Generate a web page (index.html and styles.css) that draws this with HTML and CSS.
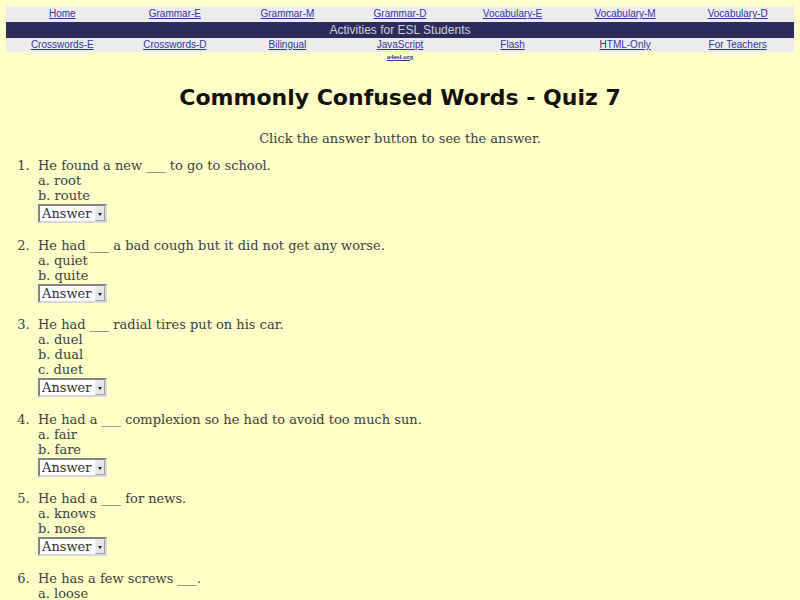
FILE: index.html
```html
<!DOCTYPE html>
<html lang="en">
<head>
  <meta charset="UTF-8" />
  <title>Commonly Confused Words - Quiz 7</title>
  <link rel="stylesheet" href="styles.css">
</head>
<body>
  <div class="topnav">
    <div class="nav-row">
      <a href="#">Home</a>
      <a href="#">Grammar-E</a>
      <a href="#">Grammar-M</a>
      <a href="#">Grammar-D</a>
      <a href="#">Vocabulary-E</a>
      <a href="#">Vocabulary-M</a>
      <a href="#">Vocabulary-D</a>
    </div>
    <div class="nav-banner">Activities for ESL Students</div>
    <div class="nav-row short">
      <a href="#">Crosswords-E</a>
      <a href="#">Crosswords-D</a>
      <a href="#">Bilingual</a>
      <a href="#">JavaScript</a>
      <a href="#">Flash</a>
      <a href="#">HTML-Only</a>
      <a href="#">For Teachers</a>
    </div>
    <div class="nav-sub">
      <a href="#" class="site-link">a4esl.org</a>
    </div>
  </div>

  <h1 class="title">Commonly Confused Words - Quiz 7</h1>
  <p class="hint">Click the answer button to see the answer.</p>

  <ol class="quiz">
    <li>
      He found a new ___ to go to school.<br>
      a. root<br>
      b. route
      <span class="answer"><select><option>Answer</option><option>route</option></select></span>
    </li>
    <li>
      He had ___ a bad cough but it did not get any worse.<br>
      a. quiet<br>
      b. quite
      <span class="answer"><select><option>Answer</option><option>quite</option></select></span>
    </li>
    <li>
      He had ___ radial tires put on his car.<br>
      a. duel<br>
      b. dual<br>
      c. duet
      <span class="answer"><select><option>Answer</option><option>dual</option></select></span>
    </li>
    <li>
      He had a ___ complexion so he had to avoid too much sun.<br>
      a. fair<br>
      b. fare
      <span class="answer"><select><option>Answer</option><option>fair</option></select></span>
    </li>
    <li>
      He had a ___ for news.<br>
      a. knows<br>
      b. nose
      <span class="answer"><select><option>Answer</option><option>nose</option></select></span>
    </li>
    <li>
      He has a few screws ___.<br>
      a. loose<br>
      b. lose
      <span class="answer"><select><option>Answer</option><option>loose</option></select></span>
    </li>
  </ol>
</body>
</html>
```

FILE: styles.css
```css
body {
  margin: 0;
  padding: 6px;
  background: #ffffc8;
  color: #404040;
  font-family: 'DejaVu Serif', serif;
  font-size: 13px;
}
.topnav {
  font-family: 'Liberation Sans', Arial, sans-serif;
}
.nav-row {
  display: grid;
  grid-template-columns: repeat(7, 1fr);
  background: #ececec;
  height: 16px;
  line-height: 16px;
  text-align: center;
  font-size: 10px;
}
.nav-row.short {
  height: 14px;
  line-height: 14px;
}
.nav-row a, .nav-sub a {
  color: #333399;
}
.nav-banner {
  background: #2b2b5c;
  color: #cfcfdf;
  text-align: center;
  font-size: 12px;
  height: 16px;
  line-height: 16px;
}
.nav-sub {
  display: grid;
  grid-template-columns: repeat(7, 1fr);
  text-align: center;
  height: 10px;
  line-height: 10px;
}
.nav-sub .site-link {
  grid-column: 4;
  font-family: 'Liberation Serif', serif;
  font-size: 7px;
  font-weight: bold;
}
.title {
  font-family: 'Comic Sans MS', 'DejaVu Sans', sans-serif;
  font-size: 22px;
  font-weight: bold;
  color: #111;
  text-align: center;
  margin: 23px 0 0;
}
.hint {
  text-align: center;
  margin: 21px 0 0;
}
.quiz {
  margin: 12px 0 0;
  padding-left: 32px;
  line-height: 15px;
}
.quiz li {
  margin-bottom: 14.5px;
}
.quiz li::marker {
  content: counter(list-item) ".  ";
}
/* drop-down that reveals the answer */
.answer {
  display: block;
  position: relative;
  box-sizing: border-box;
  width: 69px;
  height: 20px;
  padding-top: 1px;
}
.answer select {
  appearance: none;
  display: block;
  width: 69px;
  height: 19px;
  padding: 0 0 0 2px;
  border: 2px inset #d8d8d8;
  background: #fff;
  color: #333;
  font-family: 'DejaVu Serif', serif;
  font-size: 13px;
}
.answer::after {
  content: "";
  position: absolute;
  right: 2px;
  top: 3px;
  width: 10px;
  height: 15px;
  box-sizing: border-box;
  background: #e6e6e6;
  border: 1px outset #eee;
  pointer-events: none;
}
.answer::before {
  content: "";
  position: absolute;
  right: 5px;
  top: 10px;
  border-left: 2px solid transparent;
  border-right: 2px solid transparent;
  border-top: 3px solid #222;
  z-index: 1;
  pointer-events: none;
}
```
